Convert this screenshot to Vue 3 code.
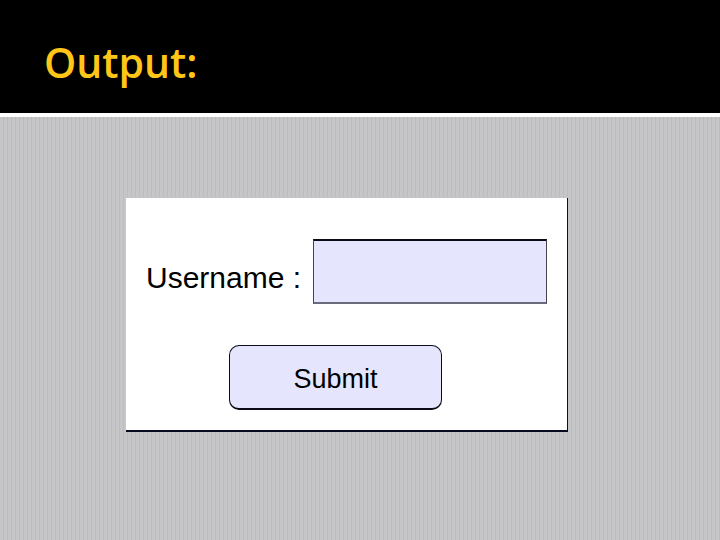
<template>
  <div class="slide">
    <header class="title-bar">
      <h1>Output:</h1>
    </header>

    <main class="content">
      <form class="card" @submit.prevent>
        <div class="field">
          <label for="username">Username :</label>
          <input id="username" v-model="username" type="text" autocomplete="off" />
        </div>
        <button type="submit">Submit</button>
      </form>
    </main>
  </div>
</template>

<script setup>
import { ref } from 'vue'

const username = ref('')
</script>

<style>
body {
  margin: 0;
}
</style>

<style scoped>
.slide {
  display: flex;
  flex-direction: column;
  min-height: 100vh;
  background: repeating-linear-gradient(90deg, #c6c6c8 0 3px, #bdbdbf 3px 4px);
  font-family: "Liberation Sans", Arial, sans-serif;
}

.title-bar {
  padding: 36px 44px 25px;
  background: #000;
  border-bottom: 4px solid #fff;
}

h1 {
  margin: 0;
  color: #ffc617;
  font-family: "Open Sans", "Noto Sans", sans-serif;
  font-size: 41px;
  font-weight: 600;
  line-height: 52px;
}

.content {
  flex: 1;
  padding: 81px 152px 40px 126px;
}

.card {
  display: flex;
  flex-direction: column;
  align-items: center;
  gap: 41px;
  box-sizing: border-box;
  padding: 41px 20px 20px;
  background: #fff;
  border-right: 1px solid #111;
  border-bottom: 2px solid #070b22;
  color: #000;
}

.field {
  display: flex;
  align-items: center;
  gap: 12px;
  align-self: stretch;
}

label {
  flex: none;
  padding-top: 12px;
  font-size: 30px;
  line-height: 36px;
}

input {
  flex: 1;
  min-width: 0;
  height: 65px;
  box-sizing: border-box;
  padding: 0 12px;
  background: #e5e5fe;
  border: 1px solid #44444f;
  border-top: 2px solid #0b0b18;
  border-bottom: 2px solid #6b6b7c;
  border-radius: 0;
  font-family: inherit;
  font-size: 27px;
  outline: none;
}

button {
  width: 213px;
  height: 65px;
  margin-right: 22px;
  padding: 4px 0 0;
  background: #e5e5fe;
  border: 1px solid #0b0b18;
  border-bottom-width: 2px;
  border-radius: 10px;
  color: #000;
  font-family: inherit;
  font-size: 27px;
}
</style>
